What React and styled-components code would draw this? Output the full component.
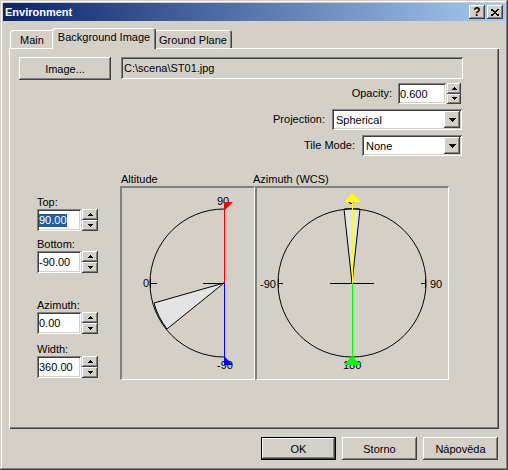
import styled, { createGlobalStyle, css } from 'styled-components'

const GlobalStyle = createGlobalStyle`
  html, body {
    margin: 0;
    padding: 0;
    background: #d4d0c8;
  }
  body {
    font-family: "Liberation Sans", Arial, sans-serif;
    font-size: 11px;
    color: #000;
  }
`;

const raised = css`
  box-shadow: inset -1px -1px #404040, inset 1px 1px #fff,
    inset -2px -2px #808080, inset 2px 2px #d4d0c8;
`;

const sunken = css`
  box-shadow: inset 1px 1px #808080, inset -1px -1px #fff,
    inset 2px 2px #404040, inset -2px -2px #d4d0c8;
`;

const SpinArrow = ({ up }) => (
  <svg width="5" height="3" shapeRendering="crispEdges">
    <polygon points={up ? '2.5,0 5,3 0,3' : '0,0 5,0 2.5,3'} fill="#000" />
  </svg>
);

const Spinner = ({ w = 16, h = 22 }) => (
  <SpinBox $w={w} $h={h}>
    <SpinBtn><SpinArrow up /></SpinBtn>
    <SpinBtn><SpinArrow /></SpinBtn>
  </SpinBox>
);

const Combo = ({ w, value }) => (
  <ComboBox $w={w}>
    <ComboText>{value}</ComboText>
    <ComboBtn>
      <svg width="7" height="4" shapeRendering="crispEdges">
        <polygon points="0,0 7,0 3.5,4" fill="#000" />
      </svg>
    </ComboBtn>
  </ComboBox>
);

const SpinField = ({ label, value, selected, mt }) => (
  <SpinGroup $mt={mt}>
    <Label>{label}</Label>
    <FieldRow>
      <Edit $w={44} $h={22}>
        {selected ? <Selection>{value}</Selection> : value}
      </Edit>
      <Spinner />
    </FieldRow>
  </SpinGroup>
);

const txt = { fontFamily: 'Liberation Sans, Arial, sans-serif', fontSize: 11 };

const AltitudeDrawing = () => (
  <svg width="132" height="191">
    <path d="M102,95 L32,115 A74,74 0 0,0 45,141 Z" fill="#e4e4e4" stroke="#000" />
    <path d="M102,21 A74,74 0 0,0 102,169" fill="none" stroke="#000" />
    <g stroke="#000" shapeRendering="crispEdges">
      <line x1="81" y1="95.5" x2="102" y2="95.5" />
      <line x1="28" y1="95.5" x2="35" y2="95.5" />
      <line x1="28.5" y1="91" x2="28.5" y2="100" />
    </g>
    <text x="95" y="17" style={txt}>90</text>
    <text x="21" y="99" style={txt}>0</text>
    <text x="95" y="181" style={txt}>-90</text>
    <line x1="102.5" y1="14" x2="102.5" y2="95" stroke="#ff0000" shapeRendering="crispEdges" />
    <line x1="102.5" y1="95" x2="102.5" y2="177" stroke="#0000ff" shapeRendering="crispEdges" />
    <polygon points="102,14 111,14 102,23" fill="#ff0000" />
    <polygon points="102,168 102,177 111,177" fill="#0000ff" />
  </svg>
);

const AzimuthDrawing = () => (
  <svg width="191" height="191">
    <path d="M95,95 L87,21 A74,74 0 0,1 103,21 Z" fill="#e4e4e4" stroke="#000" />
    <circle cx="95" cy="95" r="74" fill="none" stroke="#000" />
    <g stroke="#000" shapeRendering="crispEdges">
      <line x1="73" y1="95.5" x2="117" y2="95.5" />
      <line x1="21" y1="95.5" x2="26" y2="95.5" />
      <line x1="21.5" y1="91" x2="21.5" y2="100" />
      <line x1="164" y1="95.5" x2="169" y2="95.5" />
      <line x1="168.5" y1="91" x2="168.5" y2="100" />
    </g>
    <text x="3" y="100" style={txt}>-90</text>
    <text x="173" y="100" style={txt}>90</text>
    <text x="91" y="16" style={txt}>0</text>
    <text x="86" y="181" style={txt}>180</text>
    <line x1="95.5" y1="8" x2="95.5" y2="95" stroke="#ffff00" shapeRendering="crispEdges" />
    <line x1="95.5" y1="95" x2="95.5" y2="176" stroke="#00ff00" shapeRendering="crispEdges" />
    <polygon points="95,5 87,14 104,14" fill="#ffff00" />
    <polygon points="95,168 87,177 104,177" fill="#00ff00" />
  </svg>
);

const App = () => {
  return (
    <>
      <GlobalStyle />
      <Window>
        <TitleBar>
          <Title>Environment</Title>
          <CaptionButtons>
            <CaptionBtn>?</CaptionBtn>
            <CaptionBtn>
              <svg width="8" height="7" shapeRendering="crispEdges">
                <path d="M0,0 L8,7 M8,0 L0,7" stroke="#000" strokeWidth="1.6" />
              </svg>
            </CaptionBtn>
          </CaptionButtons>
        </TitleBar>

        <TabStrip>
          <Tab $w={44}>Main</Tab>
          <Tab $w={104} $active>Background Image</Tab>
          <Tab $w={78}>Ground Plane</Tab>
        </TabStrip>

        <Panel>
          <TopRow>
            <Button $w={92}>Image...</Button>
            <PathField>C:\scena\ST01.jpg</PathField>
          </TopRow>

          <Form>
            <FormRow>
              <Label>Opacity:</Label>
              <FieldRow>
                <Edit $w={48} $h={21}>0.600</Edit>
                <Spinner w={14} h={21} />
              </FieldRow>
            </FormRow>
            <FormRow>
              <Label>Projection:</Label>
              <Combo w={130} value="Spherical" />
            </FormRow>
            <FormRow>
              <Label>Tile Mode:</Label>
              <Combo w={100} value="None" />
            </FormRow>
          </Form>

          <Lower>
            <SideColumn>
              <SpinField label="Top:" value="90.00" selected />
              <SpinField label="Bottom:" value="-90.00" mt={7} />
              <SpinField label="Azimuth:" value="0.00" mt={26} />
              <SpinField label="Width:" value="360.00" mt={9} />
            </SideColumn>

            <Graph>
              <GraphLabel>Altitude</GraphLabel>
              <GraphBox $w={135}>
                <AltitudeDrawing />
              </GraphBox>
            </Graph>
            <Graph>
              <GraphLabel $shift={-3}>Azimuth (WCS)</GraphLabel>
              <GraphBox $w={194}>
                <AzimuthDrawing />
              </GraphBox>
            </Graph>
          </Lower>
        </Panel>

        <ButtonRow>
          <Button $w={75} $default>OK</Button>
          <Button $w={75}>Storno</Button>
          <Button $w={75}>Nápověda</Button>
        </ButtonRow>
      </Window>
    </>
  );
};

export default App;

const Window = styled.div`
  width: 508px;
  height: 470px;
  box-sizing: border-box;
  padding: 3px;
  display: flex;
  flex-direction: column;
  background: #d4d0c8;
  box-shadow: inset -1px -1px #404040, inset 1px 1px #d4d0c8,
    inset -2px -2px #808080, inset 2px 2px #fff;
`;

const TitleBar = styled.div`
  height: 18px;
  display: flex;
  align-items: center;
  padding: 0 2px;
  background: linear-gradient(to right, #0a246a, #a6caf0);
  color: #fff;
  font-weight: bold;
`;

const Title = styled.span`
  line-height: 18px;
`;

const CaptionButtons = styled.div`
  margin-left: auto;
  display: flex;
  gap: 2px;
`;

const CaptionBtn = styled.div`
  width: 16px;
  height: 14px;
  box-sizing: border-box;
  display: flex;
  align-items: center;
  justify-content: center;
  background: #d4d0c8;
  color: #000;
  font-weight: bold;
  font-size: 12px;
  ${raised}
`;

const TabStrip = styled.div`
  position: relative;
  z-index: 1;
  margin-top: 7px;
  padding-left: 7px;
  height: 20px;
  display: flex;
  align-items: flex-end;
`;

const Tab = styled.div`
  position: relative;
  z-index: ${p => (p.$active ? 2 : 1)};
  box-sizing: border-box;
  width: ${p => p.$w}px;
  height: ${p => (p.$active ? 21 : 18)}px;
  margin: 0 ${p => (p.$active ? -2 : 0)}px ${p => (p.$active ? -1 : 0)}px;
  padding-top: ${p => (p.$active ? 3 : 4)}px;
  line-height: 13px;
  text-align: center;
  white-space: nowrap;
  background: #d4d0c8;
  border-radius: 3px 3px 0 0;
  box-shadow: inset 1px 1px #fff, inset -1px 0 #404040, inset -2px 0 #808080;
`;

const Panel = styled.div`
  margin-left: 6px;
  width: 490px;
  height: 381px;
  box-sizing: border-box;
  padding: 9px 0 0 10px;
  box-shadow: inset 1px 1px #fff, inset -1px -1px #404040, inset -2px -2px #808080;
`;

const TopRow = styled.div`
  display: flex;
  align-items: flex-start;
  gap: 10px;
`;

const Button = styled.div`
  width: ${p => p.$w}px;
  height: 23px;
  box-sizing: border-box;
  display: flex;
  align-items: center;
  justify-content: center;
  background: #d4d0c8;
  ${p =>
    p.$default
      ? css`
          box-shadow: inset 0 0 0 1px #000, inset -2px -2px #404040,
            inset 2px 2px #fff, inset -3px -3px #808080;
        `
      : raised}
`;

const PathField = styled.div`
  width: 342px;
  height: 22px;
  box-sizing: border-box;
  padding: 0 3px;
  display: flex;
  align-items: center;
  background: #d4d0c8;
  ${sunken}
`;

const Form = styled.div`
  margin: 3px 37px 0 0;
  display: flex;
  flex-direction: column;
  align-items: flex-end;
  gap: 5px;
`;

const FormRow = styled.div`
  display: flex;
  align-items: center;
  gap: 6px;
  margin-right: 1px;

  &:not(:first-child) {
    margin-right: 0;
    gap: 7px;
  }
`;

const Label = styled.div`
  line-height: 13px;
  white-space: nowrap;
`;

const FieldRow = styled.div`
  display: flex;
  align-items: flex-start;
  gap: 1px;
`;

const Edit = styled.div`
  width: ${p => p.$w}px;
  height: ${p => p.$h}px;
  box-sizing: border-box;
  padding: 0 2px;
  display: flex;
  align-items: center;
  background: #fff;
  white-space: nowrap;
  overflow: hidden;
  ${sunken}
`;

const Selection = styled.span`
  background: #1f5fa8;
  color: #fff;
  line-height: 13px;
`;

const SpinBox = styled.div`
  width: ${p => p.$w}px;
  height: ${p => p.$h}px;
  display: flex;
  flex-direction: column;
`;

const SpinBtn = styled.div`
  flex: 1;
  display: flex;
  align-items: center;
  justify-content: center;
  background: #d4d0c8;
  ${raised}
`;

const ComboBox = styled.div`
  width: ${p => p.$w}px;
  height: 21px;
  box-sizing: border-box;
  padding: 2px;
  display: flex;
  align-items: stretch;
  background: #fff;
  ${sunken}
`;

const ComboText = styled.div`
  flex: 1;
  padding-left: 2px;
  display: flex;
  align-items: center;
`;

const ComboBtn = styled.div`
  width: 16px;
  display: flex;
  align-items: center;
  justify-content: center;
  background: #d4d0c8;
  ${raised}
`;

const Lower = styled.div`
  margin-top: 17px;
  display: flex;
  align-items: flex-start;
`;

const SideColumn = styled.div`
  width: 61px;
  margin: 0 22px 0 18px;
  padding-top: 23px;
  display: flex;
  flex-direction: column;
`;

const SpinGroup = styled.div`
  margin-top: ${p => p.$mt || 0}px;
  display: flex;
  flex-direction: column;
`;

const Graph = styled.div`
  display: flex;
  flex-direction: column;
`;

const GraphLabel = styled.div`
  line-height: 13px;
  padding-left: 1px;
  margin-left: ${p => p.$shift || 0}px;
  white-space: nowrap;
`;

const GraphBox = styled.div`
  width: ${p => p.$w}px;
  height: 194px;
  box-sizing: border-box;
  overflow: hidden;
  border-style: solid;
  border-width: 2px 1px 1px 2px;
  border-color: #808080 #fff #fff #808080;

  svg {
    display: block;
  }
`;

const ButtonRow = styled.div`
  margin-top: 8px;
  padding-right: 7px;
  display: flex;
  justify-content: flex-end;
  gap: 6px;
`;
